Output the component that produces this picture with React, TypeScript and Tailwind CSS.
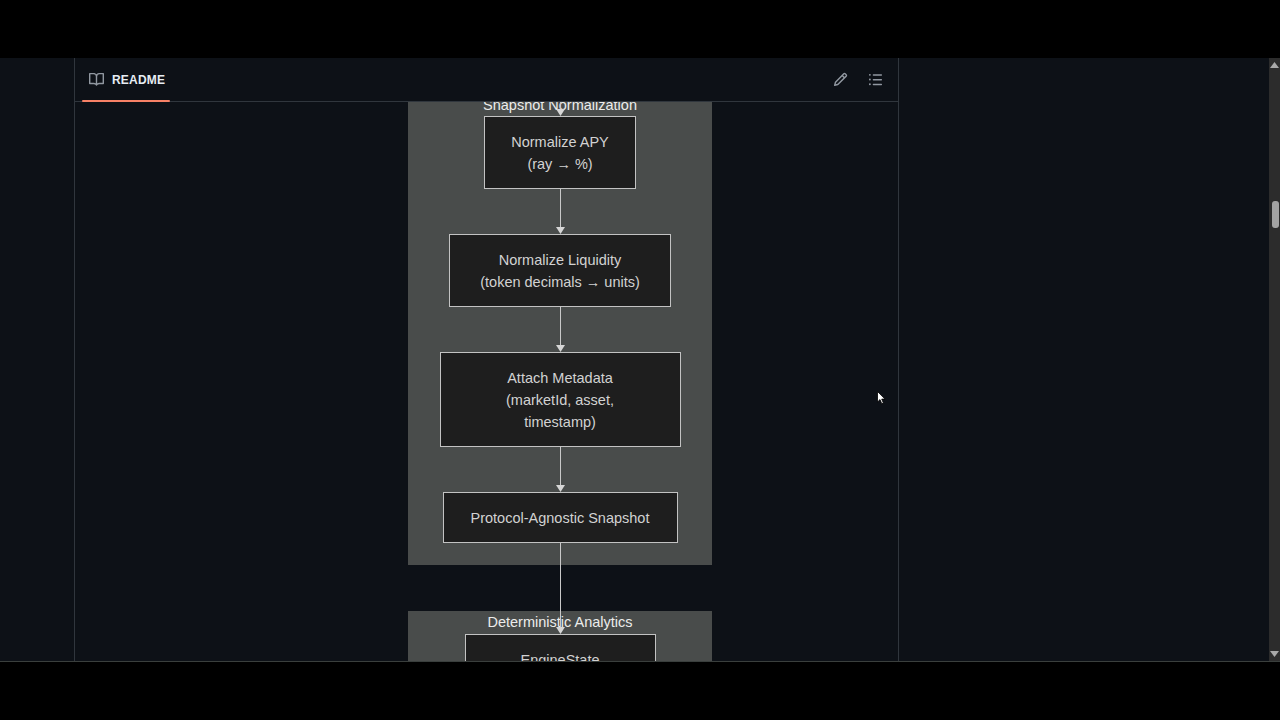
import type { ReactNode } from "react";

const font = { fontFamily: '"Liberation Sans", Arial, sans-serif' };

function Arrow() {
  return (
    <svg width="9" height="7" viewBox="0 0 9 7" className="shrink-0">
      <path d="M0 0 L9 0 L4.5 7 Z" fill="#d6d6d6" />
    </svg>
  );
}

function Connector({ h }: { h: string }) {
  return (
    <div className={`flex flex-col items-center ${h}`}>
      <div className="w-px flex-1 bg-[#c9c9c9]" />
      <Arrow />
    </div>
  );
}

function Node({ w, h, children }: { w: string; h: string; children: ReactNode }) {
  return (
    <div
      className={`${w} ${h} mx-auto flex flex-col items-center justify-center border border-[#c3c3c3] bg-[#1e1e1e] text-center text-[14.5px] leading-[22px] text-[#d2d2d2]`}
    >
      {children}
    </div>
  );
}

function ClusterLabel({ text, h, pad }: { text: string; h: string; pad: string }) {
  return (
    <div className={`relative ${h} flex items-center justify-center ${pad}`}>
      <span className="text-[14.5px] text-[#ececec]">{text}</span>
      <div className="absolute inset-0 flex flex-col items-center">
        <div className="w-px flex-1 bg-[#c9c9c9]" />
        <Arrow />
      </div>
    </div>
  );
}

function BookIcon() {
  return (
    <svg width="15" height="15" viewBox="0 0 16 16" fill="#9198a1">
      <path d="M0 1.75A.75.75 0 0 1 .75 1h4.253c1.227 0 2.317.59 3 1.501A3.743 3.743 0 0 1 11.006 1h4.245a.75.75 0 0 1 .75.75v10.5a.75.75 0 0 1-.75.75h-4.507a2.25 2.25 0 0 0-1.591.659l-.622.621a.75.75 0 0 1-1.060 0l-.622-.621A2.25 2.25 0 0 0 5.258 13H.75a.75.75 0 0 1-.75-.75Zm7.251 10.324.004-5.073-.002-2.253A2.25 2.25 0 0 0 5.003 2.5H1.5v9h3.757a3.75 3.75 0 0 1 1.994.574ZM8.755 4.75l-.004 7.322a3.752 3.752 0 0 1 1.992-.572H14.5v-9h-3.495a2.25 2.25 0 0 0-2.250 2.25Z" />
    </svg>
  );
}

function PencilIcon() {
  return (
    <svg width="15" height="15" viewBox="0 0 16 16" fill="#9198a1">
      <path d="M11.013 1.427a1.75 1.75 0 0 1 2.474 0l1.086 1.086a1.75 1.75 0 0 1 0 2.474l-8.61 8.61c-.21.21-.47.364-.756.445l-3.251.93a.75.75 0 0 1-.927-.928l.929-3.25c.081-.286.235-.547.445-.758l8.61-8.61Zm.176 4.823L9.75 4.81l-6.286 6.287a.253.253 0 0 0-.064.108l-.558 1.953 1.953-.558a.253.253 0 0 0 .108-.064Zm1.238-3.763a.25.25 0 0 0-.354 0L10.811 3.75l1.439 1.44 1.263-1.263a.25.25 0 0 0 0-.354Z" />
    </svg>
  );
}

function ListIcon() {
  return (
    <svg width="15" height="15" viewBox="0 0 16 16" fill="#9198a1">
      <path d="M5.75 2.5h8.5a.75.75 0 0 1 0 1.5h-8.5a.75.75 0 0 1 0-1.5Zm0 5h8.5a.75.75 0 0 1 0 1.5h-8.5a.75.75 0 0 1 0-1.5Zm0 5h8.5a.75.75 0 0 1 0 1.5h-8.5a.75.75 0 0 1 0-1.5ZM2 14a1 1 0 1 1 0-2 1 1 0 0 1 0 2Zm1-6a1 1 0 1 1-2 0 1 1 0 0 1 2 0ZM2 4a1 1 0 1 1 0-2 1 1 0 0 1 0 2Z" />
    </svg>
  );
}

export default function App() {
  return (
    <div className="relative flex h-screen w-full flex-col bg-black" style={font}>
      <div className="h-[58px] shrink-0" />
      <div className="flex h-[603px] shrink-0 bg-[#0d1117]">
        <div className="w-[74px] shrink-0" />
        <div className="flex w-[825px] shrink-0 flex-col border-x border-[#30363d]">
          {/* header */}
          <div className="flex h-[44px] shrink-0 items-stretch border-b border-[#30363d] pl-[7px] pr-[15px]">
            <div className="relative flex w-[88px] items-center gap-[8px] pl-[7px]">
              <BookIcon />
              <span className="text-[12px] font-bold tracking-[0.2px] text-[#e6edf3]">README</span>
              <div className="absolute -bottom-px left-0 right-0 h-[2px] rounded-full bg-[#f78166]" />
            </div>
            <div className="flex-1" />
            <div className="flex items-center gap-[20px]">
              <PencilIcon />
              <ListIcon />
            </div>
          </div>

          {/* readme body, scrolled */}
          <div className="flex-1 overflow-hidden">
            <div className="ml-[333px] mt-[-10px] w-[304px]">
              <div className="bg-[#494c4b]">
                <ClusterLabel text="Snapshot Normalization" h="h-[24px]" pad="pt-[4px]" />
                <Node w="w-[152px]" h="h-[73px]">
                  <span>Normalize APY</span>
                  <span>(ray → %)</span>
                </Node>
                <Connector h="h-[45px]" />
                <Node w="w-[222px]" h="h-[73px]">
                  <span>Normalize Liquidity</span>
                  <span>(token decimals → units)</span>
                </Node>
                <Connector h="h-[45px]" />
                <Node w="w-[241px]" h="h-[95px]">
                  <span>Attach Metadata</span>
                  <span>(marketId, asset,</span>
                  <span>timestamp)</span>
                </Node>
                <Connector h="h-[45px]" />
                <Node w="w-[235px]" h="h-[51px]">
                  <span>Protocol-Agnostic Snapshot</span>
                </Node>
                <div className="flex h-[22px] justify-center">
                  <div className="w-px bg-[#c9c9c9]" />
                </div>
              </div>
              <div className="flex h-[46px] justify-center">
                <div className="w-px bg-[#c9c9c9]" />
              </div>
              <div className="bg-[#494c4b] pb-[20px]">
                <ClusterLabel text="Deterministic Analytics" h="h-[23px]" pad="pt-[1px]" />
                <Node w="w-[191px]" h="h-[73px]">
                  <span>EngineState</span>
                  <span>(apy, liquidity)</span>
                </Node>
              </div>
            </div>
          </div>
        </div>
        <div className="flex-1" />
        {/* scrollbar */}
        <div className="flex w-[11px] shrink-0 flex-col items-center bg-[#2c2c2c]">
          <svg width="9" height="7" viewBox="0 0 9 7" className="mt-[3px]">
            <path d="M0 7 L9 7 L4.5 1 Z" fill="#a8a8a8" />
          </svg>
          <div className="ml-[2px] mt-[133px] h-[27px] w-[7px] rounded-[3px] bg-[#a3a3a3]" />
          <div className="flex-1" />
          <svg width="9" height="7" viewBox="0 0 9 7" className="mb-[3px]">
            <path d="M0 0 L9 0 L4.5 6 Z" fill="#a8a8a8" />
          </svg>
        </div>
      </div>
      <div className="h-px w-full bg-[#3a3f3d]" />
      <div className="flex-1" />

      {/* mouse cursor */}
      <svg className="absolute left-[877px] top-[391px]" width="9" height="14" viewBox="0 0 9 14">
        <path d="M0.5 0.5 L0.5 11 L3 8.6 L4.8 12.8 L6.4 12.1 L4.7 8.1 L8 8.1 Z" fill="#ffffff" stroke="#000000" strokeWidth="0.8" />
      </svg>
    </div>
  );
}
